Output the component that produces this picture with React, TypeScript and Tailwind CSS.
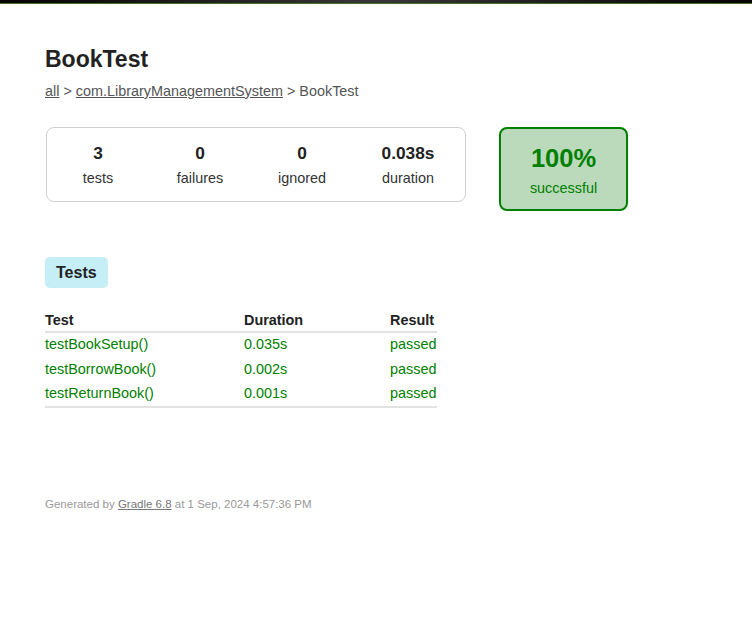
const stats = [
  { value: "3", label: "tests", width: "w-[102px]" },
  { value: "0", label: "failures", width: "w-[102px]" },
  { value: "0", label: "ignored", width: "w-[102px]" },
  { value: "0.038s", label: "duration", width: "w-[110px]" },
];

const tests = [
  { name: "testBookSetup()", duration: "0.035s", result: "passed" },
  { name: "testBorrowBook()", duration: "0.002s", result: "passed" },
  { name: "testReturnBook()", duration: "0.001s", result: "passed" },
];

export default function App() {
  return (
    <div className="min-h-[635px] bg-white font-['Liberation_Sans',Arial,sans-serif] text-[14.4px] text-[#222]">
      {/* top strip */}
      <div className="h-[4px] bg-gradient-to-r from-[#050505] via-[#383838] to-[#050505] border-b border-[#4a6b3a]" />

      <div className="px-[45px] pt-[42px]">
        <h1 className="text-[23px] leading-[26px] font-bold text-[#222]">BookTest</h1>
        <div className="mt-[9px] leading-[20px] text-[#555]">
          <a className="underline">all</a> &gt; <a className="underline">com.LibraryManagementSystem</a> &gt; BookTest
        </div>

        <div className="mt-[26px] ml-[1px] flex items-start gap-[33px]">
          <div className="w-[420px] h-[75px] flex rounded-[8px] border border-[#cfcfcf] pt-[15px]">
            {stats.map((s) => (
              <div key={s.label} className={`${s.width} flex flex-col items-center`}>
                <div className="text-[17.3px] leading-[20px] font-bold text-[#222]">{s.value}</div>
                <div className="mt-[6px] leading-[18px] text-[#333]">{s.label}</div>
              </div>
            ))}
          </div>

          <div className="w-[129px] h-[84px] flex flex-col items-center rounded-[8px] border-2 border-[#008000] bg-[#bbd9bb] pt-[14px] text-[#008000]">
            <div className="text-[25.5px] leading-[30px] font-bold">100%</div>
            <div className="mt-[6px] leading-[18px]">successful</div>
          </div>
        </div>

        <div className="mt-[46px] flex">
          <div className="h-[31px] px-[11px] flex items-center rounded-[5px] bg-[#c6eef6] text-[16px] font-bold text-[#222]">
            Tests
          </div>
        </div>

        <table className="mt-[20px] w-[392px] border-collapse text-left">
          <thead>
            <tr className="border-b-2 border-[#e2e2e2]">
              <th className="w-[199px] p-0 h-[24px] leading-[20px] font-bold align-middle">Test</th>
              <th className="w-[146px] p-0 h-[24px] leading-[20px] font-bold align-middle">Duration</th>
              <th className="p-0 h-[24px] leading-[20px] font-bold align-middle">Result</th>
            </tr>
          </thead>
          <tbody className="text-[#008000]">
            {tests.map((t) => (
              <tr key={t.name}>
                <td className="p-0 h-[25px] align-middle">{t.name}</td>
                <td className="p-0 h-[25px] align-middle">{t.duration}</td>
                <td className="p-0 h-[25px] align-middle">{t.result}</td>
              </tr>
            ))}
            <tr className="border-t-2 border-[#e2e2e2]">
              <td colSpan={3} className="p-0 h-0" />
            </tr>
          </tbody>
        </table>

        <div className="mt-[88px] text-[11.5px] leading-[16px] text-[#999]">
          Generated by <a className="underline text-[#777]">Gradle 6.8</a> at 1 Sep, 2024 4:57:36 PM
        </div>
      </div>
    </div>
  );
}
